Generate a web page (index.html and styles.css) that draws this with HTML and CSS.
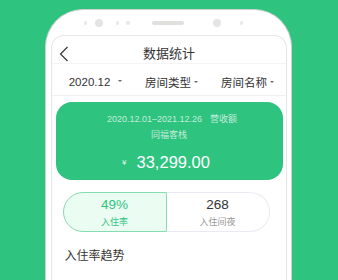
FILE: index.html
```html
<!DOCTYPE html>
<html lang="zh">
<head>
<meta charset="utf-8">
<link rel="stylesheet" href="styles.css">
</head>
<body>
<div class="phone">
  <div class="notch">
    <span class="dot d1"></span>
    <span class="cam c1"></span>
    <span class="dot d2"></span>
    <span class="dot d3"></span>
    <span class="pill"></span>
    <span class="cam c2"></span>
    <span class="dot d4"></span>
  </div>
  <div class="screen">
    <div class="header">
      <svg class="back" width="10" height="16" viewBox="0 0 10 16"><path d="M8.5 1 L1.5 8 L8.5 15" fill="none" stroke="#333" stroke-width="1.2"/></svg>
      <div class="title">数据统计</div>
      <span></span>
    </div>
    <div class="filters">
      <div class="filter f1">2020.12<i class="caret"></i></div>
      <div class="filter f2">房间类型<i class="caret"></i></div>
      <div class="filter f3">房间名称<i class="caret"></i></div>
    </div>
    <div class="card">
      <div class="range"><span>2020.12.01–2021.12.26</span><span class="lbl">营收额</span></div>
      <div class="shop">同福客栈</div>
      <div class="amount"><span class="yen">¥</span><span class="num">33,299.00</span></div>
    </div>
    <div class="tabs">
      <div class="tab active"><div class="val">49%</div><div class="sub">入住率</div></div>
      <div class="tab"><div class="val">268</div><div class="sub">入住间夜</div></div>
    </div>
    <div class="section-title">入住率趋势</div>
  </div>
</div>
</body>
</html>
```

FILE: styles.css
```css
html, body {
  margin: 0;
  padding: 0;
}
body {
  width: 338px;
  height: 280px;
  overflow: hidden;
  background: #2ec37f;
  font-family: "Liberation Sans", "Noto Sans CJK SC", sans-serif;
  color: #333;
}
.phone {
  box-sizing: border-box;
  margin: 9px 0 0 45px;
  width: 247px;
  height: 300px;
  background: #fff;
  border: 1.5px solid #cfcfcf;
  border-bottom: none;
  border-radius: 38px 38px 0 0;
}
.notch {
  height: 25px;
  display: flex;
  align-items: center;
  padding-top: 1px;
  box-sizing: border-box;
}
.dot {
  width: 3.5px;
  height: 3.5px;
  border-radius: 50%;
  background: #e8e8e8;
}
.cam {
  width: 8px;
  height: 8px;
  border-radius: 50%;
  background: #e4e4e4;
}
.pill {
  width: 32px;
  height: 4px;
  border-radius: 2px;
  background: #e0e0dc;
}
.d1 { margin-left: 37.5px; }
.c1 { margin-left: 8px; }
.d2 { margin-left: 12.5px; }
.d3 { margin-left: 7px; }
.pill { margin-left: 22.5px; }
.c2 { margin-left: 29px; }
.d4 { margin-left: 18.5px; }

.screen {
  margin: 0 4.5px;
  height: 300px;
  border: 1px solid #e6e6e6;
  border-bottom: none;
  border-radius: 13px 13px 0 0;
  background: #fff;
}
.header {
  box-sizing: border-box;
  height: 28px;
  padding-top: 8px;
  display: grid;
  grid-template-columns: 30px 1fr 30px;
  align-items: center;
  border-bottom: 1px solid #f4f4f4;
}
.back {
  margin-left: 7.5px;
  display: block;
}
.title {
  text-align: center;
  font-size: 13px;
  line-height: 18px;
  color: #333;
  padding-left: 1px;
}
.filters {
  box-sizing: border-box;
  height: 32px;
  display: grid;
  grid-template-columns: 1fr 1fr 1fr;
  padding: 4px 0 0 6px;
  align-items: center;
  border-bottom: 1px solid #f0f0f0;
  font-size: 11.5px;
  color: #333;
}
.filter {
  text-align: center;
}
.caret {
  display: inline-block;
  width: 0;
  height: 0;
  border-left: 2px solid transparent;
  border-right: 2px solid transparent;
  border-top: 2.5px solid #666;
  vertical-align: middle;
  margin-left: 3px;
  margin-top: -2px;
}
.f1 .caret { margin-left: 8px; }
.card {
  margin: 6px 3px 0 4px;
  height: 78px;
  border-radius: 16px;
  background: #2ec37f;
  display: flex;
  flex-direction: column;
  align-items: center;
  color: #fff;
}
.range {
  margin-top: 11px;
  font-size: 9px;
  line-height: 12px;
  color: rgba(255, 255, 255, 0.72);
  display: flex;
  gap: 8px;
  padding-left: 6px;
}
.shop {
  margin-top: 4px;
  font-size: 9px;
  line-height: 12px;
  color: rgba(255, 255, 255, 0.72);
}
.amount {
  margin-top: 11px;
  display: flex;
  align-items: center;
  gap: 10px;
  padding-right: 6px;
}
.yen {
  font-size: 8px;
  color: rgba(255, 255, 255, 0.85);
}
.num {
  font-size: 16.5px;
  line-height: 20px;
  color: #fff;
}
.tabs {
  margin: 12px 0 0 11px;
  width: 207px;
  height: 40px;
  display: grid;
  grid-template-columns: 104px 103px;
}
.tab {
  box-sizing: border-box;
  border: 1px solid #e9ebf2;
  border-left: none;
  border-radius: 0 20px 20px 0;
  display: flex;
  flex-direction: column;
  align-items: center;
  justify-content: center;
}
.tab.active {
  background: #ebfcf3;
  border: 1px solid #86dcae;
  border-radius: 20px 0 0 20px;
}
.val {
  font-size: 13.5px;
  line-height: 16px;
  color: #333;
}
.sub {
  font-size: 9px;
  line-height: 12px;
  margin-top: 3px;
  color: #999;
}
.active .val, .active .sub {
  color: #2ec37f;
}
.section-title {
  margin: 16px 0 0 13px;
  font-size: 12px;
  line-height: 16px;
  color: #333;
}
```
